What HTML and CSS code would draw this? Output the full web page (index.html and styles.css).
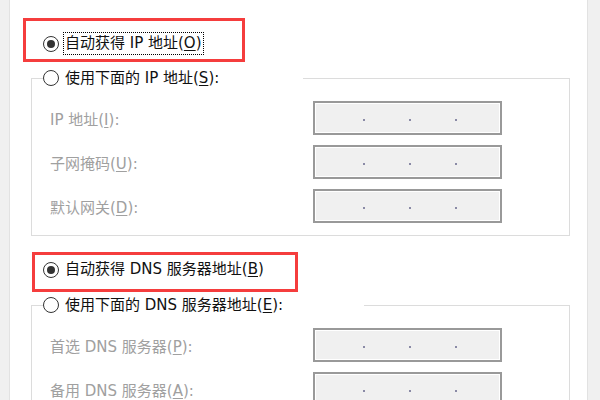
FILE: index.html
```html
<!DOCTYPE html>
<html lang="zh-CN">
<head>
<meta charset="utf-8">
<title>Internet 协议版本 4 属性</title>
<link rel="stylesheet" href="styles.css">
</head>
<body>
<div class="window">
  <div class="edge-left"></div>
  <main class="panel">
    <div class="opt opt-top">
      <span class="radio checked"></span>
      <span class="cap focus">自动获得 IP 地址(<u>O</u>)</span>
    </div>
    <fieldset class="group">
      <legend class="opt legend-ip"><span class="radio"></span><span class="cap">使用下面的 IP 地址(<u>S</u>):</span></legend>
      <div class="fields">
        <div class="field"><span class="label">IP 地址(<u>I</u>):</span><span class="ipbox"><i></i><i></i><i></i></span></div>
        <div class="field"><span class="label">子网掩码(<u>U</u>):</span><span class="ipbox"><i></i><i></i><i></i></span></div>
        <div class="field"><span class="label">默认网关(<u>D</u>):</span><span class="ipbox"><i></i><i></i><i></i></span></div>
      </div>
    </fieldset>
    <div class="opt opt-dns">
      <span class="radio checked"></span>
      <span class="cap">自动获得 DNS 服务器地址(<u>B</u>)</span>
    </div>
    <fieldset class="group group-dns">
      <legend class="opt legend-dns"><span class="radio"></span><span class="cap">使用下面的 DNS 服务器地址(<u>E</u>):</span></legend>
      <div class="fields">
        <div class="field"><span class="label">首选 DNS 服务器(<u>P</u>):</span><span class="ipbox"><i></i><i></i><i></i></span></div>
        <div class="field"><span class="label">备用 DNS 服务器(<u>A</u>):</span><span class="ipbox"><i></i><i></i><i></i></span></div>
      </div>
    </fieldset>
  </main>
  <div class="edge-right"></div>
  <div class="mark mark-ip"></div>
  <div class="mark mark-dns"></div>
</div>
</body>
</html>
```
FILE: styles.css
```css
* { box-sizing: border-box; }
html, body { margin: 0; padding: 0; background: #fff; }
body {
  font-family: "DejaVu Sans", "Noto Sans CJK SC", sans-serif;
  font-size: 15px;
  color: #111;
}
.window {
  position: relative;
  width: 600px;
  height: 400px;
  overflow: hidden;
  display: flex;
  background: #fff;
}
.edge-left {
  width: 10px;
  flex-shrink: 0;
  background: #f0f0f0;
  border-right: 1px solid #e2e2e2;
}
.edge-right {
  width: 13px;
  flex-shrink: 0;
  background: #f0f0f0;
  border-left: 1px solid #e2e2e2;
}
.panel {
  flex: 1;
  min-width: 0;
  display: flex;
  flex-direction: column;
  align-items: flex-start;
}
.opt {
  display: flex;
  align-items: center;
  height: 22px;
}
.opt-top { margin: 32px 0 0 33px; height: 24px; }
.opt-dns { margin: 22px 0 0 33px; height: 24px; }
.radio {
  width: 16px;
  height: 16px;
  border: 1.5px solid #333;
  border-radius: 50%;
  margin-right: 4px;
  display: grid;
  place-items: center;
  flex-shrink: 0;
  background: #fff;
}
.radio.checked::after {
  content: "";
  width: 8px;
  height: 8px;
  border-radius: 50%;
  background: #333;
}
.cap {
  padding: 1px;
  border: 1px solid transparent;
  line-height: 19px;
  white-space: nowrap;
}
.cap.focus { border: 1px dotted #000; }
u { text-decoration: underline; text-underline-offset: 2px; }
.group {
  margin: 12px 0 0 21px;
  width: 539px;
  border: 1px solid #dcdcdc;
  padding: 0 0 12px 0;
  min-width: 0;
}
.group-dns { margin-top: 13px; }
legend.opt {
  margin-left: 11px;
  padding: 0;
}
.legend-ip { width: 260px; }
.legend-dns { width: 321px; }
.fields {
  padding: 12px 0 0 18px;
  display: flex;
  flex-direction: column;
  gap: 10px;
}
.field {
  display: flex;
  align-items: center;
  height: 34px;
}
.label {
  width: 263px;
  color: #a0a0a0;
  white-space: nowrap;
}
.ipbox {
  width: 189px;
  height: 34px;
  border: 2px solid #999;
  box-shadow: inset 0 0 0 1px #fff;
  background: #f0f0f0;
  display: flex;
  align-items: center;
  padding: 3px 0 0 48px;
  gap: 44px;
}
.ipbox i {
  width: 2px;
  height: 2px;
  background: #8a8aa6;
}
.mark {
  position: absolute;
  border: 3px solid #f53d3d;
}
.mark-ip { left: 23px; top: 18px; width: 222px; height: 44px; }
.mark-dns { left: 32px; top: 252px; width: 266px; height: 40px; }
```
